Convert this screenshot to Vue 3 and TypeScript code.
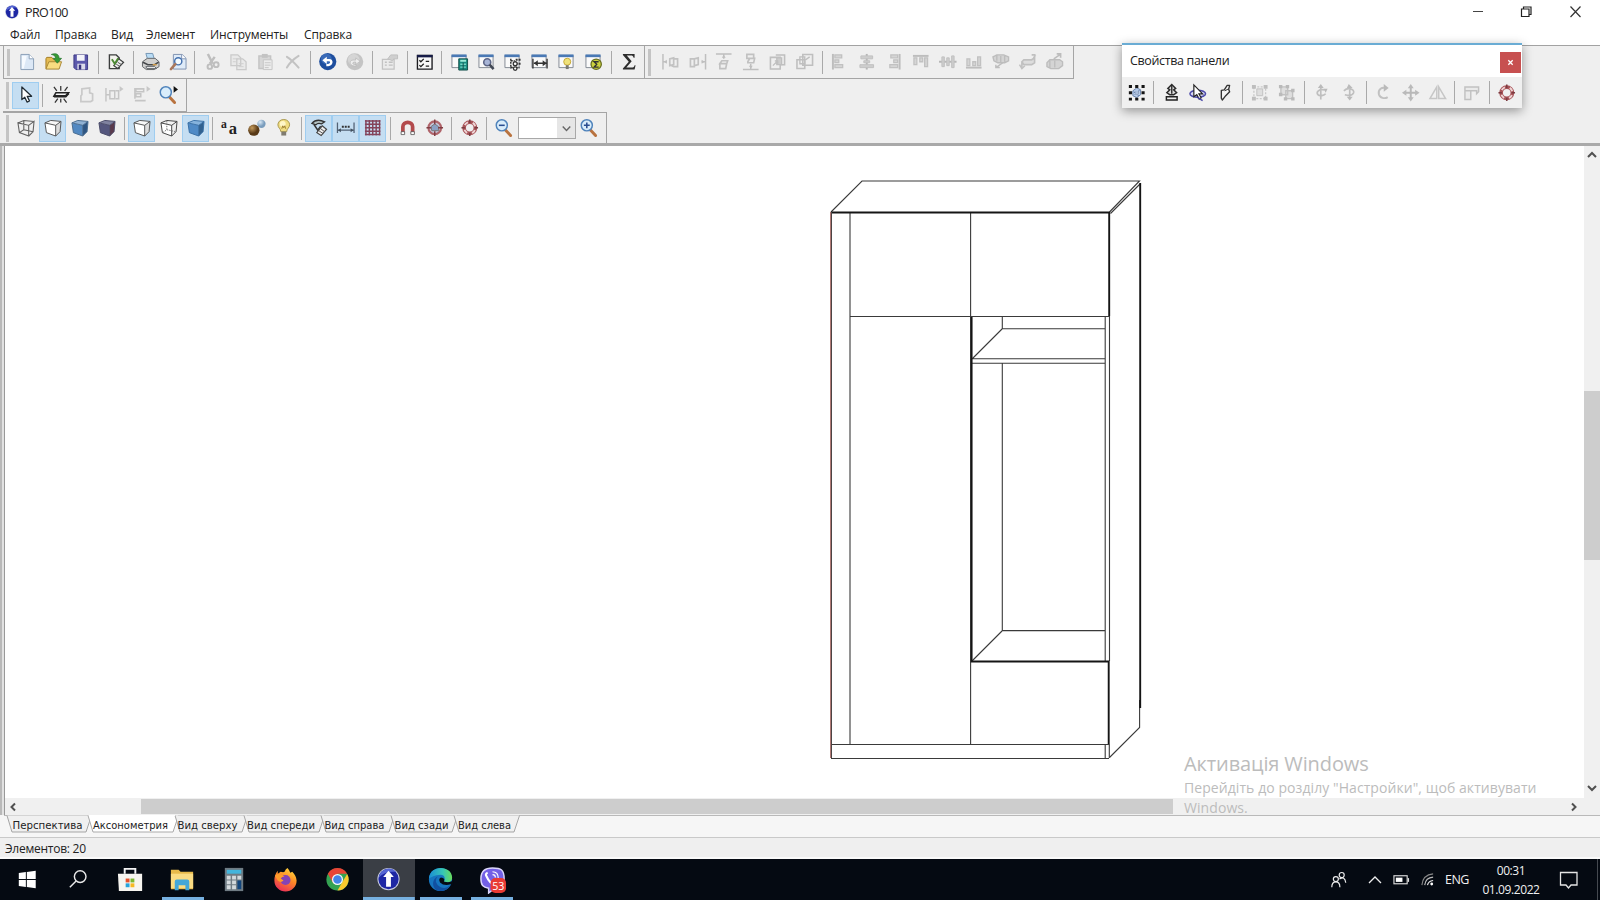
<script setup lang="ts">
interface Tool {
  icon: string
  active?: boolean
  off?: boolean
}
type Entry = Tool | '|' | 'combo'

const b = (icon: string): Tool => ({ icon })
const on = (icon: string): Tool => ({ icon, active: true })
const off = (icon: string): Tool => ({ icon, off: true })

const win = '<path d="M2 3.500h14.500v12.500H2z" fill="#fafafa" stroke="#858b94"/><path d="M1.500 2.500h15.500v2.800h-15.500z" fill="#4a79b5"/>'
const cube = (front: string, side: string, top: string, stroke: string): string =>
  `<path d="M2 5l11 2.500v11L3.500 15z" fill="${front}"/><path d="M13 7.500L18.500 3.500 17.500 14l-4.500 4.500z" fill="${side}"/><path d="M2 5l6-2.500 10.500 1-5.500 4z" fill="${top}"/><path d="M2 5l11 2.500v11L3.500 15zM13 7.500l5.500-4L17.500 14 13 18.500M2 5l6-2.500 10.500 1" fill="none" stroke="${stroke}" stroke-linejoin="round"/>`
const lens = '<path d="M11.500 12l5.500 6" stroke="#b9733f" stroke-width="3" stroke-linecap="round"/><circle cx="8" cy="7.500" r="5.700" fill="#d9edfb" stroke="#4f83bb" stroke-width="1.500"/>'
const ring = '<circle cx="10" cy="10" r="5.800" fill="none" stroke="#a85358" stroke-width="3.800"/><circle cx="10" cy="10" r="5.800" fill="none" stroke="#efd5d5" stroke-width="2" stroke-dasharray="4 5.110" stroke-dashoffset="-2.500"/><path d="M10 1.500v3.500M10 15v3.500M1.500 10h3.500M15 10h3.500" stroke="#7b3c41" stroke-width="1.600"/>'

const icons: Record<string, string> = {
  file: '<path d="M4 2.500h8.500l4.500 4.500v11H4z" fill="#dce8f6" stroke="#8b9fb8"/><path d="M5 4h5l-3 13H5z" fill="#f6faff"/><path d="M12.500 2.500V7H17" fill="#fff" stroke="#8b9fb8"/>',
  open: '<path d="M2 17V6.500l1-1h5l1.500 2H15V17z" fill="#e5bc54" stroke="#a47d25"/><path d="M2 17.500l3-7.500h13l-2.500 7.500z" fill="#f9dd80" stroke="#a98835"/><path d="M7.500 2.500c5-2 8 0 8 4h2.500l-4.300 5-4.200-5h2.500c0-2-1.500-3.500-4.500-4z" fill="#379a35" stroke="#22722d" stroke-width=".7"/>',
  save: '<path d="M3 3h14v15H5l-2-2z" fill="#5b58ab" stroke="#3d3a85"/><path d="M6 3h8v6H6z" fill="#f3f3fa"/><path d="M6.500 12h8v6h-8z" fill="#dadaea"/><path d="M8 13h2.500v5H8z" fill="#35317b"/>',
  props: '<path d="M3.500 3h7l3 3v11h-10z" fill="#f3f3ee" stroke="#3b3d3d" stroke-width="1.400"/><path d="M13 7l5 3.500-6 6.500-4-3z" fill="#eee" stroke="#3b3d3d" stroke-width="1.200"/><path d="M6 7.500l3 4.500 3.500-5.500" fill="none" stroke="#4d8a34" stroke-width="2"/><path d="M10.500 12.500l4 2.500M12 10.500l4 2.500" stroke="#555"/>',
  print: '<path d="M5 1.500h7l2 7H7z" fill="#b9dcf5" stroke="#7597b5"/><path d="M1.500 10l5-3.500h8l4 3.500v5l-5 3h-8l-4-3z" fill="#d0d0cf" stroke="#626568"/><path d="M2 10.500l5 2.500h7l4-2.500" fill="none" stroke="#45484b" stroke-width="1.500"/><path d="M5 15h9l2 2H6z" fill="#f9f9f9" stroke="#62676b"/><path d="M12 13h4" stroke="#cf9b49" stroke-width="1.500"/>',
  preview: '<path d="M5.500 2.500h9l4 4V17.500h-13z" fill="#dfebf8" stroke="#8193b2"/><path d="M14 2.500V7h4.500" fill="#fff" stroke="#8193b2"/><circle cx="10.500" cy="9.500" r="3.700" fill="#f4fbff" stroke="#4572b0" stroke-width="1.500"/><path d="M7.500 12.500L3 17.500" stroke="#a9775b" stroke-width="2.600" stroke-linecap="round"/>',
  cut: '<path d="M5 2l5 10M12 5L7 12" stroke="#b9b9b9" stroke-width="2.500"/><circle cx="7" cy="15" r="2.300" fill="none" stroke="#b9b9b9" stroke-width="2"/><circle cx="13.500" cy="13" r="2.500" fill="none" stroke="#b9b9b9" stroke-width="2"/>',
  copy: '<path d="M2 3h7l3 3v8H2zM8 7h6l3.500 3v8H8z" fill="#e9e9e9" stroke="#c6c6c6" stroke-width="1.300"/><path d="M4 7h5M4 10h3M10 12h5M10 15h5" stroke="#ccc"/>',
  paste: '<path d="M3 4h12v13H3z" fill="#d5d5d5" stroke="#c0c0c0" stroke-width="1.500"/><path d="M6 2h6v4H6z" fill="#bfbfbf"/><path d="M7.500 8h9v10h-9z" fill="#ececec" stroke="#c2c2c2"/><path d="M9 11h6M9 13.500h6M9 16h4" stroke="#c2c2c2"/>',
  del: '<path d="M4 5q5 3 12 11M16 4Q8 9 4 16" stroke="#bebebe" stroke-width="2" fill="none" stroke-linecap="round"/>',
  undo: '<circle cx="10" cy="9.800" r="8.800" fill="#1e4e9e"/><circle cx="8.500" cy="7" r="5.500" fill="#4c7fc9" opacity=".6"/><path d="M4.500 8.500L9 4.800v2.400h2.500c5 0 4.500 7-1 7.300H8.500v-2.300h2c2.500-.2 2.400-2.600.5-2.600H9v2.600z" fill="#fff"/>',
  redo: '<circle cx="10" cy="10" r="8.700" fill="#c0c0c0"/><circle cx="9" cy="8" r="6" fill="#d3d3d3"/><path d="M15.500 9.500L11 6v2.300H8.500c-5 0-4 6 1 6h2v-1.500h-2c-2 0-2-2.500 0-2.500H11v2.500z" fill="#eee" stroke="#b0b0b0" stroke-width=".7"/>',
  sheet: '<path d="M2.500 7.500h12v10h-12z" fill="#ebebeb" stroke="#bfbfbf" stroke-width="1.300"/><path d="M5 10.500h2M9 10.500h4M5 13.500h2M9 13.500h4" stroke="#bbb" stroke-width="1.400"/><path d="M8 7l3-4h7v4h-4l-1 2z" fill="#ccc" stroke="#bbb"/>',
  checks: '<path d="M2.500 3.500h15v14h-15z" fill="#f9f9f9" stroke="#1c1c20" stroke-width="1.400"/><path d="M2 3h16v2.500H2z" fill="#171c48"/><path d="M4.500 8.500l1.500 1.500 3-3M4.500 13.500L6 15l3-3" stroke="#222" stroke-width="1.300" fill="none"/><path d="M11 9.500h3.500M11 14.500h3.500" stroke="#222" stroke-width="1.300"/>',
  wCalc: win + '<path d="M9 7h9v11.500H9z" fill="#178b7f" stroke="#124f4b"/><path d="M10.500 9h6" stroke="#9be9d7" stroke-width="2"/><path d="M10.500 12.500h6M10.500 15.500h6" stroke="#72d6c5" stroke-width="1.500"/><path d="M13.500 11v7" stroke="#124f4b"/>',
  wZoom: win + '<circle cx="10.500" cy="10.500" r="3.600" fill="#a8b5d7" stroke="#5d6687" stroke-width="1.600"/><path d="M13 13l4 4.500" stroke="#434956" stroke-width="2.600"/>',
  wTree: win + '<path d="M8 7v10M8 9h4M8 16h4" stroke="#333" stroke-width="1.500" stroke-dasharray="2 1" fill="none"/><path d="M13 8h5M13 12h5M13 16h4" stroke="#333" stroke-width="2" stroke-dasharray="2 1"/><circle cx="12.500" cy="12" r="2" fill="#fff" stroke="#333" stroke-width="1.300"/><circle cx="12.500" cy="17" r="1.800" fill="#fff" stroke="#333" stroke-width="1.300"/>',
  wDim: win + '<path d="M3 7v10M17.500 7v10M4 11.500h13" stroke="#333" stroke-width="1.400"/><path d="M4 11.500l4-3v6zM17 11.500l-4-3v6z" fill="#333"/>',
  wBulb: win + '<circle cx="10.500" cy="10" r="3.600" fill="#efe27a" stroke="#c7a936"/><path d="M9 13.500h3v4H9z" fill="#7b7a70"/>',
  wSum: win + '<circle cx="12.500" cy="12.500" r="5.300" fill="#ccd23f" stroke="#686e21" stroke-width="1.300"/><path d="M15 10H10.500l2.500 2.500-2.500 3H15" fill="none" stroke="#333" stroke-width="1.500"/>',
  sum: '<path d="M4 2h12v4h-1c-.5-2-1-2.500-3-2.500H8l5 6-5.500 6.500h5c2 0 3-.5 3.500-2.500h1L16 18H4v-1l6-7-6-7z" fill="#2d2d2d"/>',
  distL: '<path d="M2 2v16M2 10h4" stroke="#bababa" stroke-width="1.500"/><path d="M3 10l3-2v4z" fill="#bababa"/><path d="M9 7l4-1v7l-4 1zM13 7h4v8h-4l-2-1" fill="none" stroke="#bebebe" stroke-width="1.700"/>',
  distR: '<path d="M18 2v16M14 10h4" stroke="#bababa" stroke-width="1.500"/><path d="M17 10l-3-2v4z" fill="#bababa"/><path d="M2.500 7h4v8h-4zM6.500 7l4-1v7l-4 1" fill="none" stroke="#bebebe" stroke-width="1.700"/>',
  distT: '<path d="M2 2h16M10 2v5" stroke="#bababa" stroke-width="1.500"/><path d="M10 3L8 6h4z" fill="#bababa"/><path d="M6 12l2-3h6l-1 3zM6 12h7l-1 5H6z" fill="none" stroke="#bdbdbd" stroke-width="1.700"/>',
  distB: '<path d="M2 18h16M10 12v6" stroke="#bababa" stroke-width="1.500"/><path d="M10 17l-2-3h4z" fill="#bababa"/><path d="M6 2.500h7v4H6zM7 10l2-3.500h5L13 11H7z" fill="none" stroke="#bdbdbd" stroke-width="1.700"/>',
  back: '<path d="M2.500 5.500h10v12h-10zM8 3h9v10h-5" fill="none" stroke="#bababa" stroke-width="1.600"/><path d="M9 6h5v7H9zM5 14l5-5M7 9h3v3" fill="#cacaca" stroke="#bababa" stroke-width="1.300"/>',
  fwd: '<path d="M8 2.500h10v11H8zM2 8h8v9H2z" fill="none" stroke="#bababa" stroke-width="1.600"/><path d="M5 5h5v7H5zM11 8l4-3" fill="none" stroke="#bababa" stroke-width="1.400"/>',
  alL: '<path d="M3 2v16" stroke="#b8b8b8" stroke-width="2"/><path d="M5 3h7v3H5zM5 8h4v3H5zM5 13h8v3H5z" fill="#d3d3d3" stroke="#bdbdbd" stroke-width="1.300"/>',
  alC: '<path d="M10 2v16" stroke="#b0b0b0" stroke-width="2"/><path d="M4 4h12v3H4zM7 9h6v2H7zM3 13h14v3H3z" fill="#cacaca" stroke="#bcbcbc"/>',
  alR: '<path d="M16 2v16" stroke="#b8b8b8" stroke-width="2"/><path d="M7 3h7v3H7zM10 8h4v3h-4zM6 13h8v3H6z" fill="#d3d3d3" stroke="#bdbdbd" stroke-width="1.300"/>',
  alT: '<path d="M2 4h16" stroke="#b8b8b8" stroke-width="2"/><path d="M3 6h3v7H3zM9 6h3v4H9zM14 6h3v9h-3z" fill="#d3d3d3" stroke="#bdbdbd" stroke-width="1.300"/>',
  alM: '<path d="M1 10h18" stroke="#b0b0b0" stroke-width="2"/><path d="M4 5h2.500v10H4zM9 6h2.500v8H9zM14 4h2.500v12H14z" fill="#cacaca" stroke="#bcbcbc"/>',
  alB: '<path d="M2 16h16" stroke="#b8b8b8" stroke-width="2"/><path d="M3 7h3v7H3zM9 10h3v4H9zM14 5h3v9h-3z" fill="#d3d3d3" stroke="#bdbdbd" stroke-width="1.300"/>',
  eqA: '<path d="M2 5l4-2h7l5 2v4l-4 2H7L3 9zM6 3v6M10 4v7M14 4v6" fill="#d2d2d2" stroke="#b8b8b8" stroke-width="1.400"/><path d="M5 16l7-5M5 13v3h4" fill="none" stroke="#b8b8b8" stroke-width="1.500"/>',
  eqB: '<path d="M4 10l2-2h8l3-2v5l-3 2H6zM4 10v6M16 6l2-3M14 3h4" fill="#dcdcdc" stroke="#bcbcbc" stroke-width="1.700"/><path d="M1.500 13l2.500 4 3-3" fill="none" stroke="#bcbcbc" stroke-width="1.500"/>',
  eqC: '<path d="M2 11l3-3h10l3 2v4l-4 3H6l-4-2zM5 9v7M10 9v7" fill="#d2d2d2" stroke="#b8b8b8" stroke-width="1.400"/><path d="M9 7l6-4M12 2h4v4" fill="none" stroke="#b8b8b8" stroke-width="1.700"/>',
  arrow: '<path d="M6 2v13l3-2.500 2.300 5 2.500-1.200-2.300-4.700H16z" fill="#fff" stroke="#202a32" stroke-width="1.300" stroke-linejoin="round"/>',
  wall: '<path d="M3 11.500l2-3.500h13l-3 3.500z" fill="#f4f4f4" stroke="#222" stroke-width="1.500"/><path d="M3 11.500h12l3-3" stroke="#222" stroke-width="2.400" fill="none"/><path d="M10 1v5M3 2l3 4M17 2l-3 4M10 14v4M4 18l3-4M16 18l-3-4" stroke="#333" stroke-width="1.300"/>',
  shape: '<path d="M5 4l8-1v5l3 1v7l-2 1H4v-6l1-1z" fill="none" stroke="#c5c5c5" stroke-width="1.700"/>',
  dimTool: '<path d="M2 3v14M2 10h4M12 6h3v8h-3M6 6h5v8H6z" fill="none" stroke="#c1c1c1" stroke-width="1.500"/><path d="M16 1l4 3-4 3z" fill="#c3c3c3"/>',
  alTool: '<path d="M4 3v11M5 4h8v3H5zM5 9h5v3H5zM4 16h11" fill="none" stroke="#c1c1c1" stroke-width="1.600"/><path d="M16 1l4 3-4 3z" fill="#c3c3c3"/>',
  zoomTool: lens + '<path d="M16 1l4.500 3.500L16 8z" fill="#111"/>',
  wire: '<path d="M2 5l11 2.500v11L3.500 15zM13 7.500l5.500-4L17.500 14 13 18.500M2 5l6-2.500 10.500 1M8 2.500v9.500l-4.500 3M8 12l9.500 2" fill="none" stroke="#626262" stroke-width="1.100"/>',
  cubeW: cube('#fff', '#dcdcdc', '#f7f7f7', '#555'),
  cubeC: cube('#fff', '#eee', '#f4f4f4', '#444') + '<path d="M8 3v9l-4 3M8 12l9 2" fill="none" stroke="#777" stroke-dasharray="1.500 1"/>',
  cubeB: cube('#4f8ac6', '#32618f', '#86b3dd', '#3b70a6'),
  cubeT: cube('#5289c2', '#2e5582', '#91b2d3', '#4a6d90'),
  cubeD: cube('#55577e', '#5a3a4c', '#8083a0', '#4b4c6a'),
  font: '<text x="1" y="10" font-family="Liberation Serif, serif" font-size="12" font-weight="bold" fill="#222">a</text><text x="9" y="16" font-family="Liberation Serif, serif" font-size="17" font-weight="bold" fill="#222">a</text>',
  balls: '<defs><radialGradient id="bb" cx=".35" cy=".3"><stop offset="0" stop-color="#c49a5c"/><stop offset="1" stop-color="#593a17"/></radialGradient><radialGradient id="bs" cx=".35" cy=".3"><stop offset="0" stop-color="#dbe9f5"/><stop offset="1" stop-color="#7a9dbd"/></radialGradient></defs><circle cx="14.800" cy="6" r="4.300" fill="url(#bs)"/><circle cx="7" cy="12.500" r="5.800" fill="url(#bb)"/>',
  bulb: '<path d="M10 1.500c-4 0-6 3-6 5.500 0 3 3 4 3 7h6c0-3 3-4 3-7 0-2.500-2-5.500-6-5.500z" fill="#f0dc82" stroke="#a9984e"/><circle cx="9" cy="6" r="3" fill="#fff6c8"/><path d="M7.500 14h5v4h-5z" fill="#807c70"/><path d="M8 11l1-3 1 2 1-2 1 3" fill="none" stroke="#9d7f32"/>',
  snap: '<path d="M3 5.500q5-5.500 13-1.500l-3 2q-4-1.500-6 1z" fill="#b5c4c6" stroke="#333" stroke-width="1.300"/><path d="M5 6.500l4 6 3-4" fill="none" stroke="#333" stroke-width="1.600"/><path d="M13.500 8l4.500 3.500-5.500 6.500-4.500-3z" fill="#eee" stroke="#444" stroke-width="1.200"/><path d="M10 13l4.500 3M12 11l4 3" stroke="#555"/>',
  meas: '<path d="M1.500 4.500v11M18.500 4.500v11M2 12.500h16" stroke="#526275" stroke-width="1.300"/><path d="M2 12.500l3-2v4zM18 12.500l-3-2v4z" fill="#435160"/><path d="M6 9h2M9 9h2M12 9h2" stroke="#333" stroke-width="2"/>',
  grid: '<path d="M3 2v16M6.500 2v16M10 2v16M13.500 2v16M17 2v16M2 3h16M2 6.500h16M2 10h16M2 13.500h16M2 17h16" stroke="#84435a" stroke-width="1.500"/>',
  magnet: '<path d="M5 16V9c0-6 10-6 10 0v7" fill="none" stroke="#b34a4c" stroke-width="3.800"/><path d="M3.200 14h3.600v3H3.200zM13.200 14h3.600v3h-3.600z" fill="#fff" stroke="#555" stroke-width=".8"/>',
  target: '<circle cx="10" cy="10" r="6.500" fill="#c6c8dc" stroke="#b0646a" stroke-width="2.200"/><path d="M6 9l4-3 4 3v4H7z" fill="#8ba0c4" stroke="#777"/><path d="M10 1.500v5M10 13.500v5M1.500 10h5M13.500 10h5" stroke="#803d43" stroke-width="1.500"/>',
  ring,
  zoomOut: lens + '<path d="M5 7.500h6" stroke="#2a4e91" stroke-width="1.600"/>',
  zoomIn: lens + '<path d="M5 7.500h6M8 4.500v6" stroke="#2a4e91" stroke-width="1.600"/>',
  selAll: '<path d="M6 8l4-3 4 2v5l-4 3-4-2z" fill="#b7cbe8" stroke="#6781a9"/><path d="M7 9l5 4M8 12l5-5" stroke="#5673a3"/><path d="M3.500 2v17M10 2v17M16.500 2v17" stroke="#151515" stroke-width="3.200" stroke-dasharray="3 3.500"/><path d="M8.300 8h3.400v4H8.300z" fill="#a9bddb"/>',
  lift: '<path d="M10 1.500l4 4-2 1.500 3 3-3 2H8l-3-2 3-3-2-1.500z" fill="#ddd" stroke="#2c2c2c" stroke-width="1.500"/><path d="M10 3v8" stroke="#333" stroke-width="1.500"/><path d="M4.500 14h11v3.500h-11z" fill="#eee" stroke="#222" stroke-width="1.500"/>',
  orbit: '<ellipse cx="10" cy="11" rx="8" ry="3.600" fill="#d8d8f6" stroke="#4b49a9" stroke-width="1.600"/><path d="M6 2v12l3-2 2.500 4.500 2-1.300-2.300-4H15z" fill="#fff" stroke="#222" stroke-width="1.200"/><path d="M10 15l5 3" stroke="#4b49a9" stroke-width="1.600"/>',
  turn: '<path d="M6.500 7.500l3-.5 3-4.500h2.500l-1 4 1 2.500-4 4-3.500 4.500-1-2z" fill="#f7f7f7" stroke="#333" stroke-width="1.400" stroke-linejoin="round"/><path d="M10 8l4-2" stroke="#333"/>',
  group: '<path d="M4 4h12v12H4z" fill="none" stroke="#c4c4c4" stroke-width="1.300" stroke-dasharray="2 1.500"/><path d="M7 6h6v7H7z" fill="#ddd" stroke="#bdbdbd"/><path d="M2 2h4v4H2zM14 2h4v4h-4zM2 14h4v4H2zM14 14h4v4h-4z" fill="#b9b9b9"/>',
  ungroup: '<path d="M4 4h7v8H4zM9 8h7v8H9z" fill="#ddd" stroke="#bdbdbd" stroke-width="1.400"/><path d="M2 2h3.500v3.500H2zM9 2h3.500v3.500H9zM2 10h3.500v3.500H2zM7 14.500h3.500V18H7zM14.500 14.500H18V18h-3.500zM14.500 6H18v3.500h-3.500z" fill="#b5b5b5"/>',
  rotA: '<path d="M9 3v14M13 7c-6-1-9 2-7 5 2 2 6 1 8-1" fill="none" stroke="#bababa" stroke-width="1.700"/><path d="M9 1L6 5h6zM12 6l4 0-2 4z" fill="#b5b5b5"/>',
  rotB: '<path d="M11 4v12M5 8c4-4 11-2 10 2-1 3-5 3-9 2" fill="none" stroke="#bababa" stroke-width="1.700"/><path d="M11 18l-3-4h6zM10 1l4 4H8z" fill="#b5b5b5"/>',
  rotC: '<path d="M13 5.500c-5-2-9 1-8 6 1 4 6 5 9 3" fill="none" stroke="#bcbcbc" stroke-width="2"/><path d="M10 1l5 4-5 4z" fill="#b5b5b5"/>',
  move: '<path d="M10 4v12M4 10h12" stroke="#b2b2b2" stroke-width="2"/><path d="M10 1L7 5.500h6zM10 19l-3-4.500h6zM1 10l4.500-3v6zM19 10l-4.500-3v6z" fill="#b5b5b5"/>',
  mirror: '<path d="M9 4v12H2zM11 4v12h7z" fill="none" stroke="#c2c2c2" stroke-width="1.500"/>',
  corner: '<path d="M3 4h14v5l-2 2V8H9v9H3zM3 8h6v8" fill="#eaeaea" stroke="#bdbdbd" stroke-width="1.500"/>',
}

const rowMain: Entry[] = [
  b('file'), b('open'), b('save'), '|', b('props'), '|', b('print'), b('preview'), '|',
  off('cut'), off('copy'), off('paste'), off('del'), '|', b('undo'), off('redo'), '|', off('sheet'), '|',
  b('checks'), '|', b('wCalc'), b('wZoom'), b('wTree'), b('wDim'), b('wBulb'), b('wSum'), '|', b('sum'),
]
const rowAlign: Entry[] = [
  ...['distL', 'distR', 'distT', 'distB', 'back', 'fwd'].map(off), '|',
  ...['alL', 'alC', 'alR', 'alT', 'alM', 'alB', 'eqA', 'eqB', 'eqC'].map(off),
]
const rowTools: Entry[] = [on('arrow'), '|', b('wall'), off('shape'), off('dimTool'), off('alTool'), b('zoomTool')]
const rowView: Entry[] = [
  b('wire'), on('cubeW'), b('cubeT'), b('cubeD'), '|', on('cubeW'), b('cubeC'), on('cubeB'), '|',
  b('font'), b('balls'), b('bulb'), '|', on('snap'), on('meas'), on('grid'), '|', b('magnet'), b('target'), '|',
  b('ring'), '|', b('zoomOut'), 'combo', b('zoomIn'),
]
const rowPanel: Entry[] = [
  b('selAll'), '|', b('lift'), b('orbit'), b('turn'), '|', off('group'), off('ungroup'), '|',
  off('rotA'), off('rotB'), '|', off('rotC'), off('move'), off('mirror'), '|', off('corner'), '|', b('ring'),
]
const bars = [
  { cls: 'bar main', items: rowMain, row: 0 },
  { cls: 'bar align', items: rowAlign, row: 0 },
  { cls: 'bar tools', items: rowTools, row: 1 },
  { cls: 'bar view', items: rowView, row: 2 },
]
const rows = [0, 1, 2].map((r) => bars.filter((x) => x.row === r))

const menu = ['Файл', 'Правка', 'Вид', 'Элемент', 'Инструменты', 'Справка']

const tabs = [
  { label: 'Перспектива', x: 7, w: 81, tx: 12.5, tw: 70 },
  { label: 'Аксонометрия', x: 88, w: 87, tx: 93, tw: 75 },
  { label: 'Вид сверху', x: 175, w: 69, tx: 177.5, tw: 60 },
  { label: 'Вид спереди', x: 244, w: 77, tx: 247, tw: 68 },
  { label: 'Вид справа', x: 321, w: 70, tx: 324.5, tw: 60 },
  { label: 'Вид сзади', x: 391, w: 63, tx: 394.5, tw: 54 },
  { label: 'Вид слева', x: 454, w: 62, tx: 458, tw: 53 },
]

const apps: { name: string; state?: string; art: string }[] = [
  { name: 'start', art: '<path d="M6 8.300l7.300-1v7.200H6zM14.300 7.200L23.500 6v8.500h-9.200zM6 15.500h7.300v7.200l-7.300-1zM14.300 15.500h9.200V24l-9.200-1.200z" fill="#fff"/>' },
  { name: 'search', art: '<circle cx="15.700" cy="12" r="6" fill="none" stroke="#e8e8e8" stroke-width="1.500"/><path d="M11.500 16.500L5 23" stroke="#e8e8e8" stroke-width="1.600"/>' },
  { name: 'store', art: '<path d="M9 9V4h11v5" fill="none" stroke="#f5f5f5" stroke-width="2"/><path d="M2 9h25v18H3z" fill="#f7f5f0"/><path d="M10 14h4v4h-4z" fill="#e6522c"/><path d="M15 14h4v4h-4z" fill="#7cb82f"/><path d="M10 19h4v4h-4z" fill="#27a4dc"/><path d="M15 19h4v4h-4z" fill="#f6b922"/>' },
  { name: 'explorer', state: 'run', art: '<path d="M3 5h8l2 2h13v18H3z" fill="#e8ba4b"/><path d="M3 9h23v15H3z" fill="#fbdc83"/><path d="M7 26v-9q0-2 2-2h11q2 0 2 2v9h-4v-5h-7v5z" fill="#43a7d8"/>' },
  { name: 'calc', art: '<path d="M5 3h19v24H5z" fill="#6f7b83"/><path d="M7 5h15v4H7z" fill="#43b5dc"/><path d="M7 11h4v4H7zM12.500 11h4v4h-4zM18 11h4v4h-4zM7 16h4v4H7zM12.500 16h4v4h-4zM7 21h4v4H7zM12.500 21h4v4h-4z" fill="#d3d9dc"/><path d="M18 16h4v9h-4z" fill="#12457c"/>' },
  { name: 'firefox', art: '<defs><linearGradient id="ff" x1=".8" y1="0" x2=".3" y2="1"><stop offset="0" stop-color="#ffdf3d"/><stop offset=".45" stop-color="#ff8a26"/><stop offset="1" stop-color="#e92d59"/></linearGradient></defs><path d="M17 3q2 2 3 5l2-1q4 4 4.500 9a11.500 11.500 0 0 1-23 0q0-6 3.500-10v3l3-2q3 1 4 0 1-3 3-4z" fill="url(#ff)"/><circle cx="15" cy="15.500" r="5.200" fill="#8343b6"/><path d="M4 11q4-4 10 1-3 0-4 2l3 2q-3 3-6 0z" fill="#ff9c2b"/>' },
  { name: 'chrome', art: '<circle cx="15" cy="15" r="11.500" fill="#34a251"/><path d="M5 9a11.500 11.500 0 0 1 20 0H15l-5 9z" fill="#e74536"/><path d="M25 9.300a11.500 11.500 0 0 1-10 17.200l5-9z" fill="#fac92d"/><circle cx="15" cy="15" r="5.700" fill="#f6f7f5"/><circle cx="15" cy="15" r="4.400" fill="#4285e8"/>' },
  { name: 'pro', state: 'run current', art: '<circle cx="15" cy="14.500" r="11.500" fill="#c7cbe0"/><circle cx="15" cy="14.500" r="10.500" fill="#1e27a4"/><path d="M5 13a10.500 10.500 0 0 1 18-6q-12-1-18 6z" fill="#5666d3"/><path d="M15 6l5.500 6.500H17.500v10h-5v-10H9.500z" fill="#fff"/>' },
  { name: 'edge', state: 'run', art: '<defs><linearGradient id="eg" x1="0" x2="1"><stop offset="0" stop-color="#1a8ed5"/><stop offset=".6" stop-color="#36c6b6"/><stop offset="1" stop-color="#69dc5c"/></linearGradient></defs><circle cx="15" cy="15" r="12" fill="#1675bf"/><path d="M3 14C4-1 27 0 27 13c0 5-5 6-9 4 3-3 1-7-3-7-6 0-10 3-12 4z" fill="url(#eg)"/><path d="M12 12q-5 6 3 11 6 2 10-2-3 6-10 6c-9 0-10-12-3-15z" fill="#1150a0"/><path d="M15.500 13q-3 1-1 5 4 4 11 2l2.500 1V16q-4 3-9.500 1 2-3-3-4z" fill="#060b13"/>' },
  { name: 'viber', state: 'run', art: '<path d="M15 3c9 0 12 2 12 11s-3 11-11 11l-5 4v-5c-6-1-8-3-8-10S6 3 15 3z" fill="#7360e6" stroke="#dcd7fb" stroke-width="1.500"/><path d="M10 8q-3 1-1 4 3 7 8 8" fill="none" stroke="#fff" stroke-width="2.300"/><path d="M15 7q6 0 6 7M15 10q3 0 3 3" fill="none" stroke="#fff" stroke-width="1.200"/><rect x="13" y="13.500" width="16" height="15.500" rx="5" fill="#e93b34"/><text x="21" y="25.500" text-anchor="middle" font-family="Open Sans, sans-serif" font-size="11" fill="#fff">53</text>' },
]
const appIcon = apps[7].art
</script>

<template>
  <div class="screen">
    <header class="title">
      <svg class="logo" viewBox="2 1 26 27" v-html="appIcon" />
      <span class="name">PRO100</span>
      <svg class="winctl" viewBox="0 0 120 24">
        <path d="M6 11.500h10" stroke="#444" />
        <path d="M54.500 9h7.500v7.500h-7.500zM56.500 9V7h7.500v7.500h-2" fill="none" stroke="#222" stroke-width="1.200" />
        <path d="M103.500 6.500l10 10.500M113.500 6.500l-10 10.500" stroke="#333" stroke-width="1.200" />
      </svg>
    </header>
    <nav class="menu">
      <span v-for="(m, i) in menu" :key="m" :class="'m' + i">{{ m }}</span>
    </nav>

    <section class="toolbars">
      <div v-for="(row, r) in rows" :key="r" class="barrow">
        <div v-for="bar in row" :key="bar.cls" :class="bar.cls">
          <i class="grip" />
          <template v-for="(t, i) in bar.items" :key="i">
            <i v-if="t === '|'" class="sep" />
            <span v-else-if="t === 'combo'" class="combo">
              <svg viewBox="0 0 18 18"><path d="M5 7l4 4 4-4" fill="none" stroke="#666" stroke-width="1.500" /></svg>
            </span>
            <button v-else :class="['btn', { active: t.active, off: t.off }]">
              <svg viewBox="0 0 20 20" v-html="icons[t.icon]" />
            </button>
          </template>
        </div>
      </div>
    </section>

    <main class="work">
      <div class="edge" />
      <div class="pane">
        <div class="upper">
          <svg class="canvas" viewBox="5 147 1579 651">
            <g class="thin">
              <path d="M831 212L862 181H1139.500L1109.500 212M1110.500 213.500L1140 184" />
              <path d="M850 212V744M970.600 212V744M850 316.500H1109" />
              <path d="M1105.200 316V661M1109.500 316V661M1105.200 744V758M1109.300 744V758" />
              <path d="M1002.300 317V328.700H1105M1002 329L972 359M972 358.700H1105M972 363.200H1105" />
              <path d="M1002.300 363V630.600H1105M1002 631L972 661" />
              <path d="M831 744.500H1109M831 758.500H1109M1139.600 700V727.500L1109.500 757.500" />
            </g>
            <g class="thick">
              <path d="M831 212.500H1109.200V316M971.600 317V661.500H1108.700V744M1140.200 183V708" />
            </g>
            <path class="red" d="M830.500 212V758" />
            <path class="side" d="M831.500 212V758" />
          </svg>
          <div class="vscroll">
            <svg viewBox="0 0 16 16"><path d="M4 10l4-4 4 4" /></svg>
            <div class="vthumb" />
            <svg class="last" viewBox="0 0 16 16"><path d="M4 6l4 4 4-4" /></svg>
          </div>
        </div>
        <div class="hscroll">
          <svg viewBox="0 0 16 16"><path d="M10 4.500L6.500 8l3.500 3.500" /></svg>
          <div class="hthumb" />
          <svg class="last" viewBox="0 0 16 16"><path d="M6 4.500L9.500 8 6 11.500" /></svg>
        </div>
      </div>
    </main>

    <svg class="tabs" viewBox="0 0 1600 22">
      <path d="M4 .5H1600" stroke="#b9b9b9" />
      <g v-for="(t, i) in tabs" :key="t.label">
        <path
          :d="`M${t.x} .5l5 16.500h${t.w - 7}l5.500-16.500`"
          :fill="i === 1 ? '#fff' : '#f0f0f0'"
          :stroke="i === 1 ? '#aaa' : '#a5a5a5'"
        />
        <text :x="t.tx" y="13.500" :textLength="t.tw" lengthAdjust="spacingAndGlyphs">{{ t.label }}</text>
      </g>
      <path d="M89 .5h86" stroke="#fff" />
    </svg>
    <footer class="status">Элементов: 20</footer>

    <div class="taskbar">
      <div v-for="a in apps" :key="a.name" :class="['app', a.state]">
        <svg viewBox="0 0 30 30" v-html="a.art" />
      </div>
      <div class="tray">
        <svg class="people" viewBox="0 0 20 20">
          <g fill="none" stroke="#eee" stroke-width="1.300">
            <circle cx="6.500" cy="9" r="2.800" /><path d="M2 18q0-6 4.500-6t4.500 6" />
            <circle cx="13" cy="4.500" r="2.800" /><path d="M10.500 9q6-4 7 4" />
          </g>
        </svg>
        <svg class="chev" viewBox="0 0 16 16"><path d="M2 11l6-6 6 6" fill="none" stroke="#eee" stroke-width="1.300" /></svg>
        <svg class="batt" viewBox="0 0 18 12">
          <rect x="1" y="1.500" width="14" height="8.500" fill="none" stroke="#ddd" stroke-width="1.200" />
          <rect x="3" y="3.500" width="7" height="4.500" fill="#fff" /><path d="M16.300 4v4" stroke="#ddd" stroke-width="1.400" />
        </svg>
        <svg class="wifi" viewBox="0 0 16 16">
          <g fill="none" stroke="#888" stroke-width="1.200">
            <path d="M2 14Q3 3 14 2" /><path d="M5 14Q6 6 14 5.500" stroke="#bbb" /><path d="M8 14Q9 9.500 14 9" stroke="#eee" />
          </g>
          <circle cx="12.500" cy="12.800" r="1.500" fill="#fff" />
        </svg>
        <span class="lang">ENG</span>
        <div class="clock"><span>00:31</span><span>01.09.2022</span></div>
        <svg class="note" viewBox="0 0 20 20"><path d="M1.500 2.500h16.500v12.500h-6l-2.500 3-2.500-3h-5.500z" fill="none" stroke="#e5e5e5" stroke-width="1.300" /></svg>
        <i class="peek" />
      </div>
    </div>

    <div class="watermark">
      <div class="w1">Активація Windows</div>
      <div class="w2">Перейдіть до розділу "Настройки", щоб активувати</div>
      <div class="w2">Windows.</div>
    </div>

    <div class="float">
      <div class="fhead">
        <span>Свойства панели</span>
        <button class="fclose"><svg viewBox="0 0 8 8"><path d="M1.500 1.500l5 5M6.500 1.500l-5 5" stroke="#fff" stroke-width="1.500" /></svg></button>
      </div>
      <div class="fbar">
        <template v-for="(t, i) in rowPanel" :key="i">
          <i v-if="typeof t === 'string'" class="sep" />
          <button v-else :class="['btn', { off: t.off }]"><svg viewBox="0 0 20 20" v-html="icons[t.icon]" /></button>
        </template>
      </div>
    </div>
  </div>
</template>

<style>
body {
  margin: 0;
  overflow: hidden;
}
</style>

<style scoped>
.screen {
  position: relative;
  width: 1600px;
  height: 900px;
  overflow: hidden;
  display: flex;
  flex-direction: column;
  background: #fff;
  font-family: 'Open Sans', 'Noto Sans', sans-serif;
  font-size: 12px;
  color: #222;
}
button {
  border: 0;
  padding: 0;
  background: none;
}
.title {
  height: 24px;
  flex: none;
  display: flex;
  align-items: center;
}
.logo {
  width: 16px;
  height: 16px;
  margin: 0 5px 0 4px;
}
.name {
  font-size: 12.5px;
  letter-spacing: -0.6px;
}
.winctl {
  width: 120px;
  height: 24px;
  margin-left: auto;
  margin-right: 13px;
}
.menu {
  height: 21px;
  flex: none;
  display: flex;
  align-items: center;
  padding-left: 10px;
  line-height: 20px;
  letter-spacing: -0.12px;
  white-space: nowrap;
}
.m0 { width: 45px; }
.m1 { width: 56px; }
.m2 { width: 35px; }
.m3 { width: 64px; }
.m4 { width: 94px; }
.toolbars {
  box-sizing: border-box;
  height: 101px;
  flex: none;
  background: #efefef;
  border-top: 1px solid #a2a2a2;
  border-bottom: 3px solid #a9a9a9;
  padding-left: 3px;
}
.barrow {
  display: flex;
  height: 33px;
}
.barrow:nth-child(3) {
  height: 31px;
}
.bar {
  box-sizing: border-box;
  height: 100%;
  display: flex;
  align-items: center;
  border-right: 1px solid #a5a5a5;
  border-bottom: 1px solid #a5a5a5;
  padding-left: 2.5px;
}
.main {
  width: 642px;
  border-left: 1px solid #a5a5a5;
}
.align {
  width: 429px;
  padding-left: 3px;
}
.tools {
  width: 184px;
}
.view {
  width: 604px;
  border-top: 1px solid #a5a5a5;
  border-bottom: 0;
}
.grip {
  flex: none;
  width: 3px;
  height: 27px;
  background: #c4c4c4;
  margin-right: 4px;
}
.tools .grip {
  margin-right: 3.5px;
}
.align .grip {
  margin-right: 6px;
}
.btn {
  flex: none;
  width: 26.9px;
  height: 27px;
  display: flex;
  align-items: center;
  justify-content: center;
}
.btn svg {
  width: 19.5px;
  height: 19.5px;
}
.btn.active {
  box-sizing: border-box;
  background: #c5def2;
  border: 1px solid #9fcdf0;
}
.btn.off {
  opacity: 0.9;
}
.sep {
  flex: none;
  width: 1px;
  height: 23px;
  margin: 0 3.5px;
  background: #a9a9a9;
}
.combo {
  box-sizing: border-box;
  flex: none;
  width: 58px;
  height: 22px;
  border: 1px solid #a8a8a8;
  background: linear-gradient(to right, #fff 38px, #e6e6e6 38px);
  display: flex;
  justify-content: flex-end;
  align-items: center;
}
.combo svg {
  width: 17px;
  height: 17px;
}
.work {
  height: 669px;
  flex: none;
  display: flex;
}
.edge {
  box-sizing: border-box;
  width: 5px;
  flex: none;
  background: #e2e2e2;
  border-left: 2px solid #b9b9b9;
  border-right: 1px solid #999;
}
.pane {
  flex: 1;
  display: flex;
  flex-direction: column;
}
.upper {
  display: flex;
  height: 652px;
}
.canvas {
  width: 1579px;
  height: 651px;
  margin-top: 1px;
}
.thin path {
  fill: none;
  stroke: #3a3a3a;
  stroke-width: 1.1;
}
.thick path {
  fill: none;
  stroke: #151515;
  stroke-width: 1.9;
}
.red {
  stroke: #b07a76;
}
.side {
  stroke: #4d4444;
}
.vscroll {
  box-sizing: border-box;
  width: 16px;
  background: #f0f0f0;
  display: flex;
  flex-direction: column;
  align-items: center;
  padding-top: 1px;
}
.vscroll svg,
.hscroll svg {
  flex: none;
  width: 16px;
  height: 16px;
  fill: none;
  stroke: #505050;
  stroke-width: 2;
}
.vthumb {
  width: 16px;
  height: 169px;
  margin-top: 228px;
  background: #cdcdcd;
}
.vscroll .last {
  margin-top: auto;
  margin-bottom: 2px;
}
.hscroll {
  height: 17px;
  background: #f0f0f0;
  display: flex;
  align-items: center;
}
.hthumb {
  width: 1032px;
  height: 15px;
  margin-left: 120px;
  background: #cdcdcd;
}
.hscroll .last {
  margin-left: auto;
  margin-right: 18px;
}
.tabs {
  flex: none;
  width: 1600px;
  height: 22px;
  background: #f6f6f6;
  font-family: 'DejaVu Sans', 'Noto Sans', sans-serif;
  font-size: 11px;
}
.tabs text {
  fill: #222;
}
.status {
  flex: none;
  box-sizing: border-box;
  height: 22px;
  border-top: 1px solid #c9c9c9;
  border-bottom: 2px solid #fafafa;
  background: #efefef;
  padding-left: 5px;
  line-height: 22px;
  letter-spacing: -0.25px;
}
.taskbar {
  flex: none;
  height: 41px;
  background: #050a12;
  display: flex;
  padding-left: 2px;
  color: #f0f0f0;
}
.app {
  box-sizing: border-box;
  width: 51.6px;
  height: 41px;
  display: flex;
  justify-content: center;
  align-items: center;
}
.app svg {
  width: 29px;
  height: 29px;
}
.run {
  background: linear-gradient(#76b0e0, #76b0e0) center bottom / 42px 3px no-repeat;
}
.current {
  background: linear-gradient(#76b0e0, #76b0e0) center bottom / 52px 3px no-repeat, #3a3e45;
}
.tray {
  margin-left: auto;
  display: flex;
  align-items: center;
  padding-right: 2px;
}
.people {
  width: 18px;
  height: 18px;
  margin-right: 19px;
}
.chev {
  width: 16px;
  height: 16px;
  margin-right: 10px;
}
.batt {
  width: 17px;
  height: 12px;
  margin-right: 10px;
}
.wifi {
  width: 15px;
  height: 15px;
  margin-right: 10px;
}
.lang {
  width: 37px;
  font-size: 12.5px;
  letter-spacing: -0.5px;
}
.clock {
  width: 58px;
  display: flex;
  flex-direction: column;
  align-items: center;
  line-height: 19px;
  letter-spacing: -0.4px;
  margin-right: 19px;
}
.note {
  width: 20px;
  height: 20px;
}
.peek {
  width: 1px;
  height: 41px;
  margin-left: 18px;
  background: #454950;
}
.watermark {
  position: absolute;
  left: 1184px;
  top: 748px;
  color: #bcbcbc;
  white-space: nowrap;
}
.w1 {
  font-size: 20px;
  line-height: 31px;
  letter-spacing: -0.12px;
}
.w2 {
  font-size: 14px;
  line-height: 20px;
  letter-spacing: 0.07px;
}
.w1 + .w2 {
  margin-top: -1px;
}
.float {
  position: absolute;
  left: 1122px;
  top: 43px;
  width: 400px;
  height: 65px;
  box-sizing: border-box;
  border-top: 2px solid #6aacd4;
  background: #f0f0f0;
  box-shadow: 0 3px 10px rgba(0, 0, 0, 0.38);
}
.fhead {
  height: 32px;
  background: #fff;
  display: flex;
  justify-content: space-between;
  padding-left: 8px;
  line-height: 32px;
  font-size: 12.5px;
  letter-spacing: -0.35px;
}
.fclose {
  width: 21px;
  height: 21px;
  margin: 7px 1px 0 0;
  background: #c75050;
  display: flex;
  align-items: center;
  justify-content: center;
}
.fclose svg {
  width: 7px;
  height: 7px;
}
.fbar {
  height: 31px;
  display: flex;
  align-items: center;
  padding-left: 1px;
}
</style>
